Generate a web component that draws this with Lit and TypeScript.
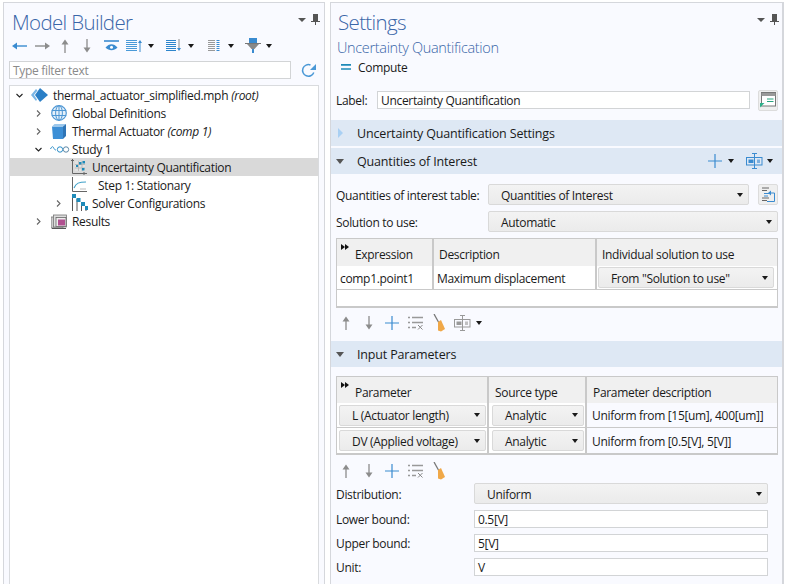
import { LitElement, html, css, svg } from "lit";
import { customElement } from "lit/decorators.js";

const icon = (w: number, h: number, body: unknown) =>
  html`<svg class="ic" width=${w} height=${h} viewBox="0 0 ${w} ${h}" fill="none">${body}</svg>`;
const B = "#3a8bd0", G = "#8c8c8c";

const caret = html`<span class="caret"></span>`;
const arrowUp = (c = G) => icon(12, 16, svg`<path d="M6 15V3" stroke=${c} stroke-width="1.3"/><path d="M2.5 6.5 6 1.5l3.5 5z" fill=${c}/>`);
const arrowDown = (c = G) => icon(12, 16, svg`<path d="M6 1v12" stroke=${c} stroke-width="1.3"/><path d="M2.5 9.5 6 14.5l3.5-5z" fill=${c}/>`);
const plus = icon(14, 14, svg`<path d="M7 0v14M0 7h14" stroke=${B} stroke-width="1.2"/>`);
const delList = icon(16, 14, svg`<path d="M0 1.500h2M4 1.500h11M0 6.500h2M4 6.500h11M0 11.500h2M4 11.500h4" stroke="#999" stroke-width="1.6"/><path d="M10 9l4.500 4.500M14.500 9 10 13.500" stroke="#888" stroke-width="1"/>`);
const broom = icon(13, 18, svg`<path d="M1 0l5 9" stroke="#777" stroke-width="1.3"/><path d="M5 8l3-2 4 9-4 2.500-3-1z" fill="#f0a848"/>`);
const tableIns = (c: string) => icon(18, 16, svg`<path d="M8.500 .5v15M6 .5h5M6 15.500h5" stroke=${c}/><rect x=".5" y="4.500" width="15.500" height="7.500" stroke=${c} fill="none"/><rect x="2.500" y="6.500" width="5" height="3.500" fill=${c}/><rect x="11" y="6.500" width="3" height="3.500" fill=${c} opacity=".6"/>`);

const rootIcon = icon(18, 14, svg`<path d="M9 0l8 7-8 7-5-7z" fill="#2b7fc6"/><path d="M5 1 0 7l5 6 1-1.500L3 7l3.500-4.500z" fill="#7ab6e6"/>`);
const globe = icon(16, 16, svg`<circle cx="8" cy="8" r="7.300" stroke="#4e97d4" stroke-width="1.200" fill="#e4f0fa"/><ellipse cx="8" cy="8" rx="3.400" ry="7.300" stroke="#4e97d4"/><path d="M.8 5.500h14.400M.8 10.500h14.400M8 .7v14.600" stroke="#4e97d4"/>`);
const cube = icon(14, 15, svg`<path d="M0 2.500h11V15H1z" fill="#3d8fd6"/><path d="M0 2.500 2.500 0H14l-3 2.500z" fill="#9cc8ec"/><path d="M11 2.500 14 0v12l-3 3z" fill="#2f74b5"/>`);
const study = icon(21, 10, svg`<path d="M.5 5c1.500-3 2.500-3 3.500-.5.500 1 1 1.500 2 1.500" stroke="#2e8fc9"/><circle cx="10" cy="5.500" r="2.700" stroke="#2e8fc9" fill="#fff"/><circle cx="16" cy="5.500" r="2.700" stroke="#5f8aa8" fill="#fff"/>`);
const uqIcon = icon(16, 16, svg`<path d="M1.500 0v14.500H16M0 1.500h3M13 13v3" stroke="#666"/><rect x="4" y="2" width="10" height="10" fill="#e2e2e2"/><path d="M7.500 2v10M11 2v10M4 5.500h10M4 9h10" stroke="#bbb"/><rect x="8" y="3" width="2.500" height="2.500" fill="#1e8ab8"/><rect x="11.500" y="2" width="2.500" height="2.500" fill="#1e8ab8"/><rect x="5" y="6" width="2" height="2" fill="#1e8ab8"/><rect x="11" y="9" width="2.500" height="2.500" fill="#1e8ab8"/>`);
const stepIcon = icon(16, 16, svg`<path d="M1.500 0v14.500H16" stroke="#666"/><path d="M3 11c2-5 5-6 12-6" stroke="#3ea0c8" stroke-width="1.100"/><path d="M9 12h6" stroke="#bbb"/>`);
const solverIcon = icon(17, 18, svg`<path d="M1.500 1v16M6 5v12M10.500 9v8M15 13v4" stroke="#555"/><path d="M1 0h4v4H1zM5.500 4h4v4h-4zM10 8h4v4h-4zM14 12h3v4h-3z" fill="#1e8ab8"/>`);
const results = icon(17, 15, svg`<rect x="0" y="3" width="12" height="11" fill="#ccc" stroke="#777" stroke-width=".8"/><rect x="2.500" y="1" width="13" height="12" fill="#ddd" stroke="#777" stroke-width=".8"/><rect x="5" y="3.500" width="10" height="9" fill="#eee" stroke="#666" stroke-width=".8"/><rect x="7" y="5.500" width="7" height="6" fill="#b0508f"/><path d="M1 14.500h14" stroke="#555"/>`);

const tbBack = icon(15, 8, svg`<path d="M3 4h12" stroke=${B} stroke-width="1.400"/><path d="M5 .5 0 4l5 3.500z" fill=${B}/>`);
const tbFwd = icon(15, 8, svg`<path d="M0 4h12" stroke=${G} stroke-width="1.400"/><path d="M10 .5 15 4l-5 3.500z" fill=${G}/>`);
const tbEye = icon(15, 11, svg`<path d="M0 1h15" stroke=${B} stroke-width="1.600"/><path d="M1.500 7.500C5 3 10 3 13.500 7.500 10 11 5 11 1.500 7.500z" fill=${B}/><circle cx="7.500" cy="7.200" r="1.500" fill="#fff"/>`);
const lines = (c: string, n = 6, w = 11) => {
  const ys = [];
  for (let i = 0; i < n; i++) ys.push(1 + i * 2);
  return svg`${ys.map((y) => svg`<path d="M0 ${y + 0.5}h${w}" stroke=${c}/>`)}`;
};
const tbUp = icon(17, 13, svg`${lines("#4a9ad8")}<path d="M14 13V3" stroke=${B}/><path d="M12 4l2-3 2 3z" fill=${B}/>`);
const tbDown = icon(16, 13, svg`${lines("#2d85cc", 6, 10)}<path d="M13 0v10" stroke=${G}/><path d="M11 9l2 3 2-3z" fill=${B}/>`);
const tbCols = icon(12, 13, svg`${lines("#999", 6, 7)}<path d="M8.500 1.500h3M8.500 3.500h3M8.500 5.500h3M8.500 7.500h3M8.500 9.500h3M8.500 11.500h3" stroke=${B}/>`);
const tbFilter = icon(16, 15, svg`<path d="M0 5.500h16" stroke="#777"/><rect x="4" y="0" width="8" height="5" fill="#3a8bd0"/><path d="M2 6h12L9.500 11h-3z" fill="#888"/><rect x="7" y="11" width="2" height="4" fill=${B}/>`);
const refresh = icon(15, 15, svg`<path d="M12.800 9.500A5.800 5.800 0 1 1 9.500 2" stroke="#4a98d6" stroke-width="1.500"/><path d="M15 1v6H9z" fill="#4a98d6"/>`);
const pin = icon(9, 11, svg`<path d="M2 0h5v7H2z" fill="#555"/><path d="M0 7.500h9M4.500 7.500V11" stroke="#555"/>`);
const panelMenu = html`<span class="pm"><span class="caret wide"></span>${pin}</span>`;
const labelBtn = icon(16, 16, svg`<rect x="1.500" y=".5" width="14" height="13.500" stroke="#777" fill="#fff"/><path d="M1.500 1h14v3h-14z" fill="#999"/><path d="M7 7h6.500M7 9.500h6.500" stroke="#29a37f"/><path d="M0 15.500V11h4.500z" fill="#2eb08a"/>`);
const loadBtn = icon(13, 15, svg`<path d="M0 1h7M0 3.500h5M0 11h7M0 13.500h5" stroke="#666"/><path d="M8.500 6H12.500v8.500H5" stroke=${B}/><path d="M2 6.500h5M2 9h4" stroke=${B}/><path d="M6 6l3-2.500v5z" fill=${B}/>`);

const sel = (t: string, cls = "") => html`<div class="sel ${cls}"><span class="tx">${t}</span>${caret}</div>`;
const tx = (t: string) => html`<span class="tx">${t}</span>`;

type RowOpts = { em?: string; on?: boolean; icls?: string };

@customElement("app-root")
export class AppRoot extends LitElement {
  static styles = css`
    :host { display: flex; width: 785px; height: 584px; overflow: hidden; background: #fff; padding: 2px 0 0 3px; box-sizing: border-box;
      font: 12px/16px "Open Sans", sans-serif; color: #1a1a1a; letter-spacing: -.32px; gap: 5px; }
    * { box-sizing: border-box; }
    .ic { display: block; flex: none; }
    .tx { padding-top: 2px; }
    .panel { background: #f9faff; border: 1px solid #d5d7dc; border-bottom: 0; height: 590px; flex: none; }
    .left { width: 322px; padding: 0 5px; }
    .right { width: 454px; border-right: 2px solid #d5d7dc; }
    .title { font: 300 20.500px/26px "Open Sans", sans-serif; color: #3a66a8; letter-spacing: -.65px; }
    .head { display: flex; justify-content: space-between; align-items: center; height: 33px; padding-top: 5px; }
    .left .head { padding-left: 3px; margin-right: -1px; }
    .right .head { padding: 5px 3px 0 7px; }
    .pm { display: flex; align-items: center; gap: 5px; margin-top: -5px; }
    .caret { display: block; flex: none; width: 0; height: 0; border: 3.500px solid transparent; border-top: 4px solid #1a1a1a; border-bottom: 0; }
    .caret.wide { border-width: 4px 4.500px 0; border-top-color: #555; }
    .tools { display: flex; align-items: center; height: 17px; padding-left: 3px; margin-top: 1px; }
    .grp { display: flex; align-items: center; }
    .t-fwd { margin-left: 8px; } .t-up { margin-left: 9px; } .t-down { margin-left: 10px; } .t-eye { margin-left: 11px; }
    .t-g1 { margin-left: 7px; gap: 5px; } .t-g2 { margin-left: 12px; gap: 6px; }
    .t-g3 { margin-left: 14px; gap: 8px; } .t-g4 { margin-left: 11px; gap: 5px; }
    .filter { display: flex; align-items: center; gap: 10px; margin-top: 7px; }
    .inp { background: #fff; border: 1px solid #d2d4d6; height: 18px; padding: 1px 0 0 3px; line-height: 16px; overflow: hidden; white-space: nowrap; }
    .filter .inp { width: 282px; color: #8a8a8a; }
    .tree { margin-top: 6px; height: 500px; background: #fff; border: 1px solid #d9dbde; border-bottom: 0; }
    .row { display: flex; align-items: center; height: 18px; white-space: nowrap; }
    .row.on { background: #d9d9d9; }
    .l0 { padding-left: 6px; } .l1 { padding-left: 25px; } .l2 { padding-left: 45px; }
    .tw { width: 7px; height: 7px; flex: none; margin-right: 8px; }
    .ri { width: 18px; margin-right: 4px; display: flex; justify-content: center; flex: none; }
    .ri.wide { width: 21px; margin-right: 1px; }
    .ri.far { margin-right: 10px; }
    .row i { margin-left: 3px; padding-top: 2px; }
    .sub { font-weight: 300; font-size: 14.500px; line-height: 20px; color: #3a66a8; padding: 1px 0 0 6px; height: 20px; margin-top: 1px; letter-spacing: -.34px; }
    .compute { display: flex; align-items: center; gap: 7px; padding-left: 10px; height: 18px; margin-top: 1px; }
    .labelrow { display: flex; align-items: center; margin-top: 13px; padding-left: 5px; height: 22px; }
    .labelrow > .tx { width: 41px; }
    .labelrow .inp { width: 373px; }
    .sq { width: 20px; height: 21px; border: 1px solid #dcdcdc; border-radius: 2px; background: #efefef; display: flex; align-items: center; justify-content: center; margin-left: 8px; flex: none; }
    .bar { display: flex; align-items: center; height: 26px; background: #dee8f4; margin-bottom: 2px; padding-left: 5px; font-size: 12.500px; letter-spacing: -.16px; }
    .bar.first { margin-top: 9px; }
    .bar .tri { width: 16px; margin-right: 5px; display: flex; }
    .bar .end { margin-left: auto; display: flex; align-items: center; padding-right: 9px; }
    .end .c1 { margin-left: 6px; } .end .ti { margin-left: 12px; } .end .c2 { margin-left: 3px; }
    .tri-d { width: 0; height: 0; border: 4.500px solid transparent; border-top: 5px solid #555; border-bottom: 0; }
    .tri-r { width: 0; height: 0; border: 5px solid transparent; border-left: 5px solid #a9d0f3; border-right: 0; margin-left: 2px; }
    .f { display: flex; align-items: center; padding-left: 5px; margin-top: 6px; }
    .f.first { margin-top: 10px; }
    .f .lab { flex: none; width: 152px; }
    .f .w1 { width: 261px; } .f .w2 { width: 290px; }
    .f .sq { margin-left: 9px; }
    .sel { display: flex; align-items: center; justify-content: space-between; height: 21px; border: 1px solid #d9d9d9; border-radius: 2px; background: linear-gradient(#f3f3f3, #ebebeb); padding: 0 5px 0 12px; white-space: nowrap; }
    .tbl { margin-left: 5px; width: 442px; border: 1px solid #c9c9c9; border-width: 1px 1px 2px 1px; background: #fff; margin-top: 6px; }
    .tbl.second { margin-top: 9px; background: #f9faff; }
    .tr { display: grid; }
    .t1 { grid-template-columns: 97px 163px 1fr; }
    .t2 { grid-template-columns: 152px 98px 1fr; }
    .th { background: #f0f0f0; height: 27px; border-right: 2px solid #c9c9c9; padding: 7px 0 0 5px; line-height: 18px; position: relative; white-space: nowrap; }
    .t2 .th { height: 26px; padding-left: 6px; }
    .th.firstcol, .t2 .th.firstcol { padding-left: 4px; }
    .th:last-child, .td:last-child { border-right: 0; }
    .thl { padding-left: 14px; }
    .ff { position: absolute; left: 4px; top: 5px; display: flex; }
    .ff b { width: 0; height: 0; border: 3px solid transparent; border-left: 4px solid #111; border-right: 0; }
    .td { border-right: 2px solid #c9c9c9; background: #fff; height: 24px; display: flex; align-items: center; padding-left: 3px; white-space: nowrap; border-bottom: 1px solid #c9c9c9; }
    .td.p { padding: 0 3px 0 1px; }
    .td .sel { flex: 1; height: 21px; }
    .t2 .td { height: 25px; }
    .t2 .td.p { padding: 0 1px 0 2px; }
    .t2 .td.p + .td.p { padding-left: 3px; }
    .t2.lastrow .td { border-bottom: 0; }
    .td.pd { padding-left: 5px; background: #f9faff; }
    .spacer { height: 16px; }
    .tb2 { display: flex; align-items: center; padding: 0 0 3px 9px; height: 33px; }
    .tb2.b { height: 28px; padding: 3px 0 0 9px; }
    .tb2 > * { margin-right: 9px; }
    .tb2 > :nth-child(1) { margin-right: 11px; }
    .tb2 > :nth-child(2) { margin-right: 10px; }
    .tb2 > :nth-child(5) { margin-right: 8px; }
    .g4 { gap: 4px; }
    .in2 { display: grid; grid-template-columns: 138px 294px; padding-left: 5px; row-gap: 6px; align-items: center; }
  `;

  private twist(open: boolean | null) {
    if (open === null) return html`<span class="tw"></span>`;
    return html`<svg class="tw" viewBox="0 0 7 7" fill="none"><path d=${open ? "M.5 2l3 3 3-3" : "M2 .5l3 3-3 3"} stroke=${open ? "#222" : "#666"} stroke-width="1.100"></path></svg>`;
  }

  private row(level: number, open: boolean | null, ic: unknown, text: string, o: RowOpts = {}) {
    return html`<div class="row l${level} ${o.on ? "on" : ""}">
      ${this.twist(open)}<span class="ri ${o.icls ?? ""}">${ic}</span>
      ${tx(text)}${o.em ? html`<i>${o.em}</i>` : ""}
    </div>`;
  }

  render() {
    return html`
      <section class="panel left">
        <div class="head"><span class="title">Model Builder</span>${panelMenu}</div>
        <div class="tools">
          ${tbBack}<span class="t-fwd">${tbFwd}</span>
          <span class="t-up">${arrowUp()}</span>
          <span class="t-down">${arrowDown()}</span>
          <span class="t-eye">${tbEye}</span>
          <span class="grp t-g1">${tbUp}${caret}</span>
          <span class="grp t-g2">${tbDown}${caret}</span>
          <span class="grp t-g3">${tbCols}${caret}</span>
          <span class="grp t-g4">${tbFilter}${caret}</span>
        </div>
        <div class="filter"><div class="inp">Type filter text</div>${refresh}</div>
        <div class="tree">
          ${this.row(0, true, rootIcon, "thermal_actuator_simplified.mph", { em: "(root)" })}
          ${this.row(1, false, globe, "Global Definitions")}
          ${this.row(1, false, cube, "Thermal Actuator", { em: "(comp 1)" })}
          ${this.row(1, true, study, "Study 1", { icls: "wide" })}
          ${this.row(2, null, uqIcon, "Uncertainty Quantification", { on: true })}
          ${this.row(2, null, stepIcon, "Step 1: Stationary", { icls: "far" })}
          ${this.row(2, false, solverIcon, "Solver Configurations")}
          ${this.row(1, false, results, "Results")}
        </div>
      </section>

      <section class="panel right">
        <div class="head"><span class="title">Settings</span>${panelMenu}</div>
        <div class="sub">Uncertainty Quantification</div>
        <div class="compute">${icon(10, 6, svg`<path d="M0 .9h10M0 5h10" stroke="#1e8ab8" stroke-width="1.700"/>`)}${tx("Compute")}</div>
        <div class="labelrow">${tx("Label:")}<div class="inp">Uncertainty Quantification</div><div class="sq">${labelBtn}</div></div>
        <div class="bar first"><span class="tri"><span class="tri-r"></span></span>${tx("Uncertainty Quantification Settings")}</div>
        <div class="bar"><span class="tri"><span class="tri-d"></span></span>${tx("Quantities of Interest")}
          <span class="end">${plus}<span class="c1">${caret}</span><span class="ti">${tableIns(B)}</span><span class="c2">${caret}</span></span></div>

        <div class="f first"><span class="lab tx">Quantities of interest table:</span>
          ${sel("Quantities of Interest", "w1")}
          <div class="sq">${loadBtn}</div></div>
        <div class="f"><span class="lab tx">Solution to use:</span>
          ${sel("Automatic", "w2")}</div>

        <div class="tbl">
          <div class="tr t1">
            <div class="th firstcol"><span class="ff"><b></b><b></b></span><span class="thl">Expression</span></div>
            <div class="th">Description</div>
            <div class="th">Individual solution to use</div>
          </div>
          <div class="tr t1">
            <div class="td">${tx("comp1.point1")}</div>
            <div class="td">${tx("Maximum displacement")}</div>
            <div class="td p">${sel('From "Solution to use"')}</div>
          </div>
          <div class="spacer"></div>
        </div>
        <div class="tb2">
          ${arrowUp()}${arrowDown()}${plus}${delList}${broom}
          <span class="grp g4">${tableIns("#999")}${caret}</span>
        </div>
        <div class="bar"><span class="tri"><span class="tri-d"></span></span>${tx("Input Parameters")}</div>

        <div class="tbl second">
          <div class="tr t2">
            <div class="th firstcol"><span class="ff"><b></b><b></b></span><span class="thl">Parameter</span></div>
            <div class="th">Source type</div>
            <div class="th">Parameter description</div>
          </div>
          <div class="tr t2">
            <div class="td p">${sel("L (Actuator length)")}</div>
            <div class="td p">${sel("Analytic")}</div>
            <div class="td pd">${tx("Uniform from [15[um], 400[um]]")}</div>
          </div>
          <div class="tr t2 lastrow">
            <div class="td p">${sel("DV (Applied voltage)")}</div>
            <div class="td p">${sel("Analytic")}</div>
            <div class="td pd">${tx("Uniform from [0.5[V], 5[V]]")}</div>
          </div>
        </div>
        <div class="tb2 b">${arrowUp()}${arrowDown()}${plus}${delList}${broom}</div>
        <div class="in2">
          ${tx("Distribution:")}${sel("Uniform")}
          ${tx("Lower bound:")}<div class="inp">0.5[V]</div>
          ${tx("Upper bound:")}<div class="inp">5[V]</div>
          ${tx("Unit:")}<div class="inp">V</div>
        </div>
      </section>
    `;
  }
}
